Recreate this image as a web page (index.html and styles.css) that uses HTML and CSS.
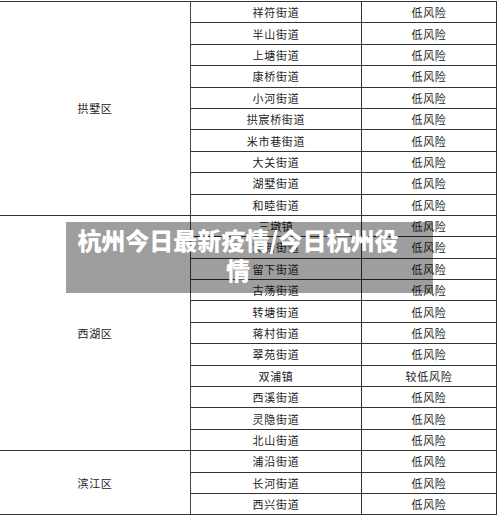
FILE: index.html
```html
<!DOCTYPE html>
<html lang="zh-CN">
<head>
<meta charset="utf-8">
<link rel="stylesheet" href="styles.css">
</head>
<body>
<div class="page">
  <table class="risk">
    <tbody>
      <tr><td class="district" rowspan="10">拱墅区</td><td class="street">祥符街道</td><td class="level">低风险</td></tr>
      <tr><td class="street">半山街道</td><td class="level">低风险</td></tr>
      <tr><td class="street">上塘街道</td><td class="level">低风险</td></tr>
      <tr><td class="street">康桥街道</td><td class="level">低风险</td></tr>
      <tr><td class="street">小河街道</td><td class="level">低风险</td></tr>
      <tr><td class="street">拱宸桥街道</td><td class="level">低风险</td></tr>
      <tr><td class="street">米市巷街道</td><td class="level">低风险</td></tr>
      <tr><td class="street">大关街道</td><td class="level">低风险</td></tr>
      <tr><td class="street">湖墅街道</td><td class="level">低风险</td></tr>
      <tr><td class="street">和睦街道</td><td class="level">低风险</td></tr>
      <tr><td class="district" rowspan="11">西湖区</td><td class="street">三墩镇</td><td class="level">低风险</td></tr>
      <tr><td class="street">文新街道</td><td class="level">低风险</td></tr>
      <tr><td class="street">留下街道</td><td class="level">低风险</td></tr>
      <tr><td class="street">古荡街道</td><td class="level">低风险</td></tr>
      <tr><td class="street">转塘街道</td><td class="level">低风险</td></tr>
      <tr><td class="street">蒋村街道</td><td class="level">低风险</td></tr>
      <tr><td class="street">翠苑街道</td><td class="level">低风险</td></tr>
      <tr><td class="street">双浦镇</td><td class="level">较低风险</td></tr>
      <tr><td class="street">西溪街道</td><td class="level">低风险</td></tr>
      <tr><td class="street">灵隐街道</td><td class="level">低风险</td></tr>
      <tr><td class="street">北山街道</td><td class="level">低风险</td></tr>
      <tr><td class="district" rowspan="3">滨江区</td><td class="street">浦沿街道</td><td class="level">低风险</td></tr>
      <tr><td class="street">长河街道</td><td class="level">低风险</td></tr>
      <tr><td class="street">西兴街道</td><td class="level">低风险</td></tr>
    </tbody>
  </table>
  <div class="caption">杭州今日最新疫情/今日杭州役情</div>
</div>
</body>
</html>
```

FILE: styles.css
```css
html, body {
  margin: 0;
  padding: 0;
  background: #fff;
}

.page {
  position: relative;
  width: 500px;
  height: 516px;
  overflow: hidden;
  padding-top: 1px;
  box-sizing: border-box;
}

.risk {
  border-collapse: collapse;
  width: 497px;
  table-layout: fixed;
  font-family: "Noto Sans CJK SC", "Noto Sans", sans-serif;
  font-size: 11px;
  letter-spacing: 0.7px;
  color: #222;
  border-top: 1px solid #666;
  border-bottom: 1px solid #666;
}

.risk td {
  height: 20.4px;
  padding: 0;
  text-align: center;
  vertical-align: middle;
  line-height: 14px;
  border-top: 1px solid #333;
  border-bottom: 1px solid #333;
}

.risk .district {
  width: 190px;
  border-right: 1px solid #444;
}

.risk .street {
  width: 170px;
  border-right: 1px solid #333;
}

.risk .level {
  border-right: 1px solid #333;
}

.caption {
  position: absolute;
  left: 66px;
  top: 222px;
  width: 367px;
  height: 71px;
  box-sizing: border-box;
  padding: 3px 32px 0 9px;
  background: rgba(0, 0, 0, 0.38);
  color: #fff;
  font-family: "Noto Sans CJK SC", "Noto Sans", sans-serif;
  font-weight: 900;
  font-size: 24px;
  line-height: 30px;
  text-align: center;
}
```
